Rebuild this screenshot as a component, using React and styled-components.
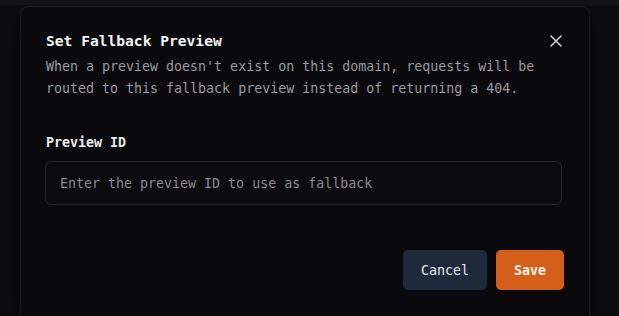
import React from "react";
import styled, { createGlobalStyle } from "styled-components";

const GlobalStyle = createGlobalStyle`
    html, body {
        margin: 0;
        padding: 0;
        background: #0d0d10;
        height: 100%;
        overflow: hidden;
    }
    * { box-sizing: border-box; }
`

const Backdrop = styled.div`
    width: 619px;
    height: 316px;
    padding: 6px 29px 0 20px;
    background:
        linear-gradient(to bottom, #141418 0px, #141418 5px, transparent 6px),
        #0d0d10;
    font-family: "DejaVu Sans Mono", "Liberation Mono", monospace;
    overflow: hidden;
`

const Modal = styled.div`
    width: 570px;
    height: 310px;
    background: #0a0a0d;
    border: 1px solid #1b1b20;
    border-bottom: none;
    border-radius: 8px 8px 0 0;
    padding: 24px 25px 0 25px;
    box-shadow: 0 10px 30px rgba(0, 0, 0, 0.6);
`

const Header = styled.div`
    display: flex;
    justify-content: space-between;
    align-items: center;
    height: 20px;
`

const Title = styled.h2`
    margin: 0;
    font-size: 14.6px;
    font-weight: bold;
    line-height: 20px;
    color: #f5f5f5;
`

const CloseButton = styled.button`
    background: none;
    border: none;
    padding: 0;
    margin-right: 2px;
    width: 12px;
    height: 12px;
    display: flex;
    align-items: center;
    justify-content: center;
    cursor: pointer;
`

const Description = styled.p`
    margin: 5px 0 0;
    font-size: 13.3px;
    line-height: 22px;
    color: #9b9b9f;
`

const Label = styled.label`
    display: block;
    margin-top: 33px;
    font-size: 13.3px;
    font-weight: 600;
    line-height: 20px;
    color: #ececec;
`

const Input = styled.input`
    display: block;
    width: 517px;
    height: 44px;
    margin: 8px 0 0 -1px;
    padding: 0 14px;
    background: #0c0c0f;
    border: 1px solid #26262b;
    border-radius: 6px;
    font-family: inherit;
    font-size: 13.3px;
    color: #ddd;
    outline: none;
    &::placeholder {
        color: #8a8a8e;
    }
`

const Footer = styled.div`
    display: flex;
    justify-content: flex-end;
    gap: 9px;
    margin-top: 45px;
`

const Button = styled.button`
    height: 40px;
    padding: 0 18px;
    border: none;
    border-radius: 5px;
    font-family: inherit;
    font-size: 13.3px;
    font-weight: ${p => p.$primary ? 'bold' : 'normal'};
    background: ${p => p.$primary ? '#d45f1b' : '#1e293b'};
    color: ${p => p.$primary ? '#fff4ea' : '#e6ebf2'};
    cursor: pointer;
`

const CloseIcon = () => (
    <svg width="12" height="12" viewBox="0 0 12 12" fill="none">
        <path d="M1 1 L11 11 M11 1 L1 11" stroke="#d4d4d8" strokeWidth="1.5" strokeLinecap="round"/>
    </svg>
)

const App = () => {
    return (
        <Backdrop>
            <GlobalStyle/>
            <Modal>
                <Header>
                    <Title>Set Fallback Preview</Title>
                    <CloseButton aria-label="Close"><CloseIcon/></CloseButton>
                </Header>
                <Description>
                    When a preview doesn't exist on this domain, requests will be<br/>
                    routed to this fallback preview instead of returning a 404.
                </Description>
                <Label htmlFor="preview-id">Preview ID</Label>
                <Input id="preview-id" placeholder="Enter the preview ID to use as fallback"/>
                <Footer>
                    <Button>Cancel</Button>
                    <Button $primary>Save</Button>
                </Footer>
            </Modal>
        </Backdrop>
    )
};

export default App
